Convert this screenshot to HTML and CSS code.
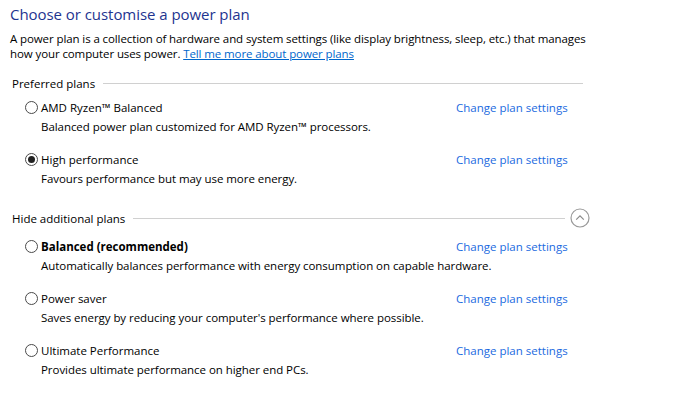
FILE: index.html
```html
<!DOCTYPE html>
<html>
<head>
<meta charset="utf-8">
<link rel="stylesheet" href="styles.css">
</head>
<body>
<main class="page">
  <h1 class="title">Choose or customise a power plan</h1>
  <p class="intro">A power plan is a collection of hardware and system settings (like display brightness, sleep, etc.) that manages<br>how your computer uses power. <a class="link" href="#">Tell me more about power plans</a></p>

  <section class="group">
    <div class="group-head first">
      <span class="group-title">Preferred plans</span>
      <span class="rule"></span>
    </div>
    <div class="plan">
      <div class="plan-row">
        <span class="radio"></span>
        <span class="plan-name">AMD Ryzen™ Balanced</span>
        <a class="change" href="#">Change plan settings</a>
      </div>
      <div class="plan-desc">Balanced power plan customized for AMD Ryzen™ processors.</div>
    </div>
    <div class="plan">
      <div class="plan-row">
        <span class="radio checked"></span>
        <span class="plan-name">High performance</span>
        <a class="change" href="#">Change plan settings</a>
      </div>
      <div class="plan-desc">Favours performance but may use more energy.</div>
    </div>
  </section>

  <section class="group">
    <div class="group-head second">
      <span class="group-title">Hide additional plans</span>
      <span class="rule"></span>
      <span class="collapse"><svg width="20" height="20" viewBox="0 0 20 20"><circle cx="10" cy="10" r="9" fill="none" stroke="#9a9a9a" stroke-width="1.2"/><path d="M6.2 11.6 L10 7.8 L13.8 11.6" fill="none" stroke="#8a8a8a" stroke-width="1.2"/></svg></span>
    </div>
    <div class="plan">
      <div class="plan-row">
        <span class="radio"></span>
        <span class="plan-name bold">Balanced (recommended)</span>
        <a class="change" href="#">Change plan settings</a>
      </div>
      <div class="plan-desc">Automatically balances performance with energy consumption on capable hardware.</div>
    </div>
    <div class="plan">
      <div class="plan-row">
        <span class="radio"></span>
        <span class="plan-name">Power saver</span>
        <a class="change" href="#">Change plan settings</a>
      </div>
      <div class="plan-desc">Saves energy by reducing your computer's performance where possible.</div>
    </div>
    <div class="plan">
      <div class="plan-row">
        <span class="radio"></span>
        <span class="plan-name">Ultimate Performance</span>
        <a class="change" href="#">Change plan settings</a>
      </div>
      <div class="plan-desc">Provides ultimate performance on higher end PCs.</div>
    </div>
  </section>
</main>
</body>
</html>
```
FILE: styles.css
```css
html, body {
  margin: 0;
  padding: 0;
  background: #ffffff;
}
body {
  font-family: "Open Sans", "Noto Sans", sans-serif;
  font-size: 11.5px;
  color: #000000;
}
.page {
  padding: 3px 0 0 10px;
  width: 580px;
  white-space: nowrap;
}
.title {
  margin: 0;
  font-size: 15px;
  font-weight: normal;
  color: #1e3490;
  line-height: 22px;
  letter-spacing: -0.05px;
}
.intro {
  margin: 6px 0 0 0;
  line-height: 15px;
  letter-spacing: -0.1px;
}
.link {
  color: #0066cc;
  text-decoration: underline;
}
.group {
  display: flex;
  flex-direction: column;
}
.group-head {
  display: flex;
  align-items: center;
  height: 20px;
  padding-left: 2px;
}
.group-head.first {
  margin-top: 12px;
  margin-right: 7px;
}
.group-head.second {
  margin-top: 7px;
}
.group-title {
  flex: 0 0 auto;
  color: #000;
}
.rule {
  flex: 1 1 auto;
  height: 1px;
  background: #d0d0d0;
  margin-left: 8px;
}
.collapse {
  flex: 0 0 auto;
  display: flex;
  margin-left: 5px;
}
.plan {
  display: flex;
  flex-direction: column;
  padding-left: 15px;
  height: 52px;
}
.group-head.first + .plan {
  margin-top: 4px;
}
.group-head.second + .plan {
  margin-top: 8px;
}
.plan-row {
  display: flex;
  align-items: center;
  height: 20px;
}
.radio {
  flex: 0 0 auto;
  width: 11px;
  height: 11px;
  border: 1px solid #4a4a4a;
  border-radius: 50%;
  box-sizing: content-box;
  display: flex;
  align-items: center;
  justify-content: center;
  margin-right: 3px;
}
.radio.checked::after {
  content: "";
  width: 7px;
  height: 7px;
  border-radius: 50%;
  background: #222;
}
.plan-name {
  width: 415px;
}
.plan-name.bold {
  font-weight: bold;
}
.change {
  color: #1a6ae0;
  text-decoration: none;
}
.plan-desc {
  padding-left: 16px;
  line-height: 20px;
  letter-spacing: -0.05px;
}
```
